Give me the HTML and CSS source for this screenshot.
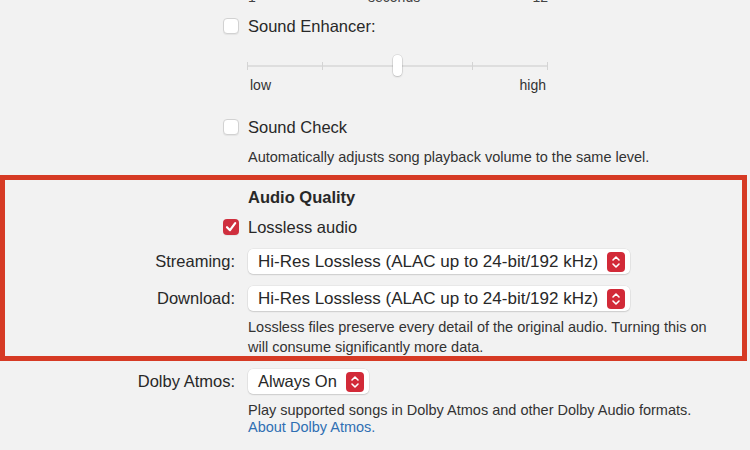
FILE: index.html
```html
<!DOCTYPE html>
<html lang="en">
<head>
  <meta charset="UTF-8">
  <title>Playback</title>
  <link rel="stylesheet" href="styles.css">
</head>
<body>

  <div class="prefs">
    <!-- crossfade labels, cut off by the window top -->
    <div class="row cut-row">
      <div class="label"></div>
      <div class="scale-labels">
        <span>1</span>
        <span>seconds</span>
        <span>12</span>
      </div>
    </div>

    <div class="row check-row enhancer">
      <div class="label"></div>
      <div class="check-line">
        <span class="checkbox"></span>
        <span>Sound Enhancer:</span>
      </div>
    </div>

    <div class="row slider-row">
      <div class="label"></div>
      <div class="slider">
        <div class="track"></div>
        <span class="tick" style="left: 0%"></span>
        <span class="tick" style="left: 25%"></span>
        <span class="tick" style="left: 75%"></span>
        <span class="tick" style="left: 100%"></span>
        <span class="thumb"></span>
      </div>
    </div>

    <div class="row">
      <div class="label"></div>
      <div class="scale-labels small">
        <span>low</span>
        <span>high</span>
      </div>
    </div>

    <div class="row check-row soundcheck">
      <div class="label"></div>
      <div class="check-line">
        <span class="checkbox"></span>
        <span>Sound Check</span>
      </div>
    </div>

    <div class="row">
      <div class="label"></div>
      <p class="note note-one">Automatically adjusts song playback volume to the same level.</p>
    </div>

    <!-- highlighted section -->
    <section class="highlight">
      <div class="row heading-row">
        <div class="label"></div>
        <h2>Audio Quality</h2>
      </div>

      <div class="row check-row lossless">
        <div class="label"></div>
        <div class="check-line">
          <span class="checkbox checked">
            <svg width="16" height="16" viewBox="0 0 16 16"><path d="M4 8.2 L7 11.2 L12.2 4.2" fill="none" stroke="#fff" stroke-width="2.2" stroke-linecap="round" stroke-linejoin="round"/></svg>
          </span>
          <span>Lossless audio</span>
        </div>
      </div>

      <div class="row popup-row streaming">
        <div class="label">Streaming:</div>
        <div class="popup">
          <span>Hi-Res Lossless (ALAC up to 24-bit/192 kHz)</span>
          <span class="stepper">
            <svg width="18" height="20" viewBox="0 0 18 20"><path d="M6 8 L9 5 L12 8 M6 12 L9 15 L12 12" fill="none" stroke="#fff" stroke-width="1.6" stroke-linecap="round" stroke-linejoin="round"/></svg>
          </span>
        </div>
      </div>

      <div class="row popup-row download">
        <div class="label">Download:</div>
        <div class="popup">
          <span>Hi-Res Lossless (ALAC up to 24-bit/192 kHz)</span>
          <span class="stepper">
            <svg width="18" height="20" viewBox="0 0 18 20"><path d="M6 8 L9 5 L12 8 M6 12 L9 15 L12 12" fill="none" stroke="#fff" stroke-width="1.6" stroke-linecap="round" stroke-linejoin="round"/></svg>
          </span>
        </div>
      </div>

      <div class="row">
        <div class="label"></div>
        <p class="note note-box">Lossless files preserve every detail of the original audio. Turning this on will consume significantly more data.</p>
      </div>
    </section>

    <div class="row popup-row dolby">
      <div class="label">Dolby Atmos:</div>
      <div class="popup">
        <span>Always On</span>
        <span class="stepper">
          <svg width="18" height="20" viewBox="0 0 18 20"><path d="M6 8 L9 5 L12 8 M6 12 L9 15 L12 12" fill="none" stroke="#fff" stroke-width="1.6" stroke-linecap="round" stroke-linejoin="round"/></svg>
        </span>
      </div>
    </div>

    <div class="row">
      <div class="label"></div>
      <p class="note note-dolby">Play supported songs in Dolby Atmos and other Dolby Audio formats.<br><a href="#">About Dolby Atmos.</a></p>
    </div>
  </div>

</body>
</html>
```

FILE: styles.css
```css
body {
  margin: 0;
  background-color: #f2f2f2;
  font-family: 'Liberation Sans', Arial, sans-serif;
  font-size: 16.5px;
  color: #282828;
  overflow: hidden;
}

.prefs {
  width: 750px;
  height: 450px;
  overflow: hidden;
}

.row {
  display: grid;
  grid-template-columns: 235px 1fr;
  column-gap: 13px;
}

.label {
  text-align: right;
  white-space: nowrap;
}

/* clipped labels of the slider above */
.cut-row {
  margin-top: -11px;
  height: 17px;
  line-height: 17px;
  font-size: 14px;
  color: #444;
}

.scale-labels {
  width: 300px;
  display: flex;
  justify-content: space-between;
}

.scale-labels.small {
  font-size: 14px;
  height: 16px;
  line-height: 16px;
  padding-left: 2px;
  width: 296px;
  color: #333;
}

.check-row {
  height: 22px;
  line-height: 22px;
}

.check-line {
  display: flex;
  align-items: center;
  gap: 9px;
  margin-left: -25px;
}

.checkbox {
  width: 14px;
  height: 14px;
  border: 1px solid #d2d2d2;
  border-radius: 4px;
  background-color: #fff;
  box-shadow: 0 1px 1px rgba(0, 0, 0, 0.06);
  display: flex;
}

.checkbox.checked {
  width: 16px;
  height: 16px;
  border: none;
  background-color: #cf2f3e;
}

.enhancer {
  margin-top: 9px;
}

.slider-row {
  margin-top: 18px;
  height: 22px;
}

.slider {
  position: relative;
  width: 300px;
  height: 22px;
}

.track {
  position: absolute;
  left: 0;
  right: 0;
  top: 10px;
  height: 2px;
  background-color: #dedede;
}

.tick {
  position: absolute;
  top: 7px;
  width: 1px;
  height: 8px;
  margin-left: -1px;
  background-color: #d4d4d4;
}

.thumb {
  position: absolute;
  left: 145px;
  top: 0;
  width: 9px;
  height: 21px;
  border-radius: 4px;
  background-color: #fff;
  box-shadow: 0 0 0 0.5px rgba(0, 0, 0, 0.15), 0 1px 2px rgba(0, 0, 0, 0.15);
}

.soundcheck {
  margin-top: 23px;
}

.note {
  margin: 0;
  font-size: 14.5px;
  color: #333;
}

.note-one {
  margin-top: 11px;
  line-height: 16px;
}

.highlight {
  margin: 10px 3px 0 0;
  border: 5px solid #d63a24;
  box-sizing: border-box;
  height: 186px;
}

.highlight .row {
  grid-template-columns: 230px 1fr;
}

.heading-row {
  margin-top: 7px;
  height: 20px;
  line-height: 20px;
}

h2 {
  margin: 0;
  font-size: 16.5px;
  font-weight: bold;
}

.lossless {
  margin-top: 9px;
}

.popup-row {
  align-items: center;
  height: 25px;
}

.popup-row .label {
  line-height: 25px;
}

.streaming {
  margin-top: 11px;
}

.download {
  margin-top: 12px;
}

.popup {
  justify-self: start;
  display: flex;
  align-items: center;
  gap: 9px;
  height: 25px;
  padding: 0 5px 0 10px;
  font-size: 17px;
  background-color: #fff;
  border-radius: 5px;
  box-shadow: 0 0 0 0.5px rgba(0, 0, 0, 0.08), 0 1px 1.5px rgba(0, 0, 0, 0.12);
}

.dolby .popup {
  font-size: 16.5px;
}

.stepper {
  width: 18px;
  height: 20px;
  border-radius: 4px;
  background-color: #d22a38;
  display: flex;
}

.note-box {
  margin-top: 6px;
  line-height: 20px;
  max-width: 470px;
}

.dolby {
  margin-top: 8px;
}

.note-dolby {
  margin-top: 8px;
  line-height: 17px;
}

.note-dolby a {
  color: #2f6fb3;
  text-decoration: none;
}
```
